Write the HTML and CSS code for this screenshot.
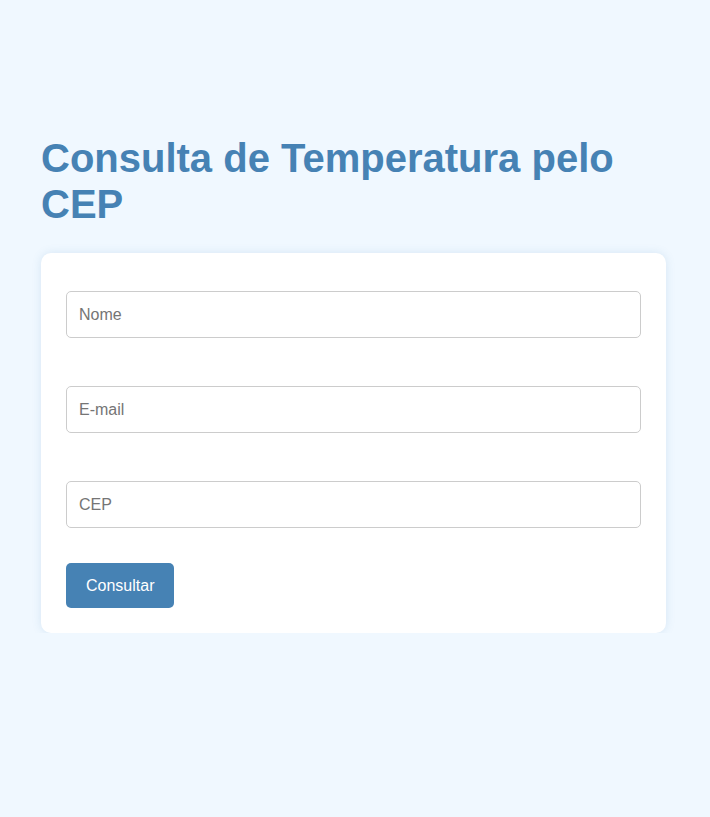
FILE: index.html
```html
<!DOCTYPE html>
<html lang="pt-BR">
<head>
<meta charset="utf-8">
<title>Consulta de Temperatura pelo CEP</title>
<link rel="stylesheet" href="styles.css">
</head>
<body>
<main class="page">
  <h1 class="title">Consulta de Temperatura pelo CEP</h1>
  <form class="card">
    <div class="field"><input class="input" type="text" placeholder="Nome"></div>
    <div class="field"><input class="input" type="email" placeholder="E-mail"></div>
    <div class="field"><input class="input" type="text" placeholder="CEP"></div>
    <button class="button" type="button">Consultar</button>
  </form>
</main>
</body>
</html>
```

FILE: styles.css
```css
html, body {
  margin: 0;
  padding: 0;
  background: #f0f8ff;
}
body {
  font-family: "Liberation Sans", Arial, sans-serif;
}
.page {
  padding: 135px 44px 0 41px;
}
.title {
  margin: 0 0 26px 0;
  font-size: 40px;
  line-height: 46px;
  font-weight: bold;
  color: #4682b4;
}
.card {
  display: block;
  background: #fff;
  border-radius: 10px;
  box-shadow: 0 0 10px rgba(70, 130, 180, 0.15);
  padding: 25px;
}
.field {
  padding-top: 13px;
  margin-bottom: 35px;
}
.input {
  display: block;
  width: 100%;
  box-sizing: border-box;
  height: 47px;
  padding: 0 12px;
  border: 1px solid #ccc;
  border-radius: 5px;
  font-family: "Liberation Sans", Arial, sans-serif;
  font-size: 16px;
  color: #333;
  background: #fff;
}
.input::placeholder {
  color: #757575;
}
.button {
  display: block;
  height: 45px;
  padding: 0 20px;
  border: none;
  border-radius: 5px;
  background: #4682b4;
  color: #fff;
  font-family: "Liberation Sans", Arial, sans-serif;
  font-size: 16px;
  cursor: pointer;
}
```
